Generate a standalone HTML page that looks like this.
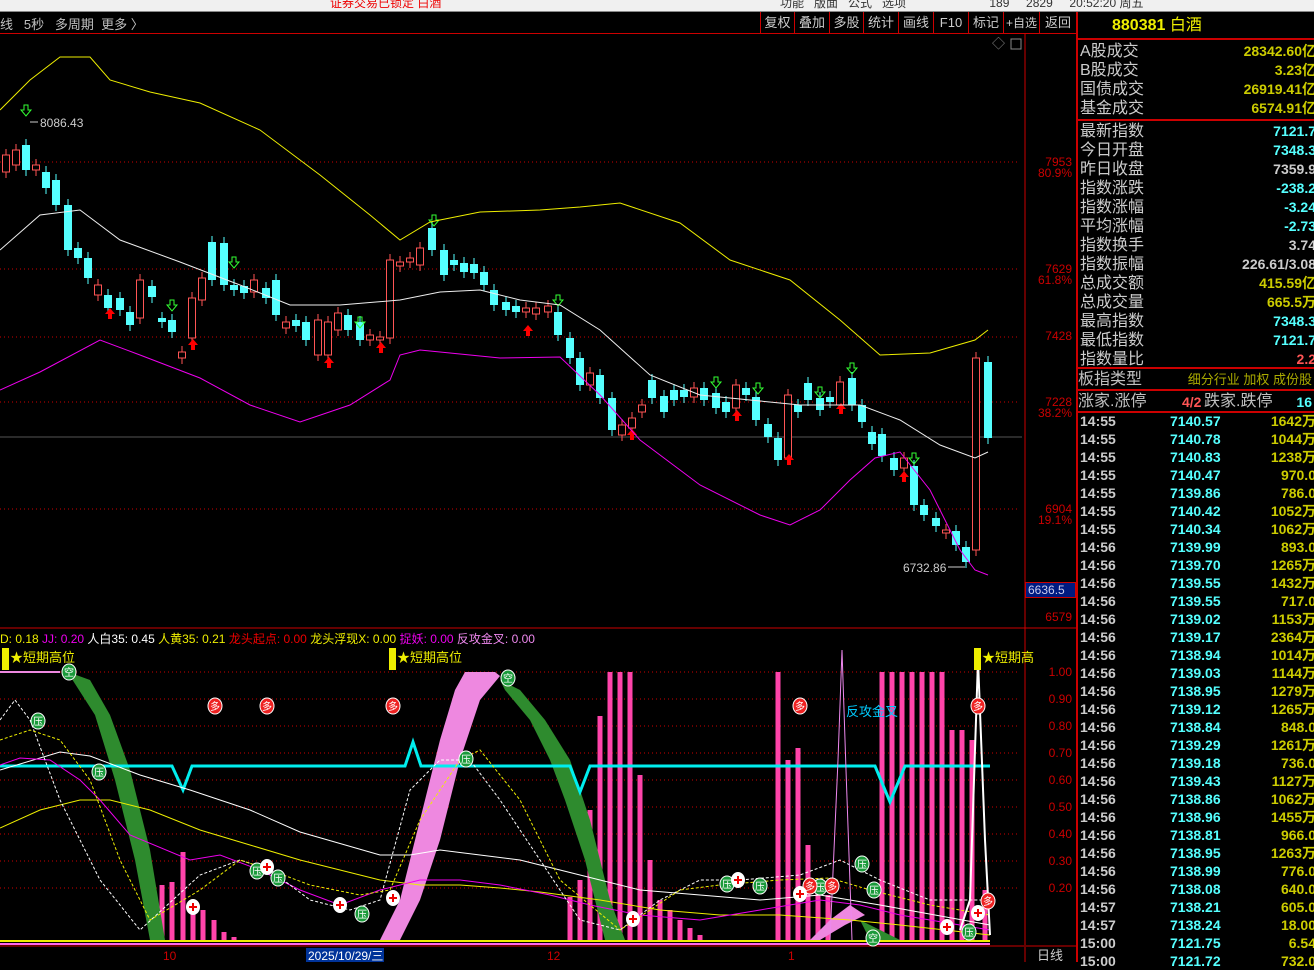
<!DOCTYPE html>
<html><head><meta charset="utf-8"><style>
*{margin:0;padding:0;box-sizing:border-box}
body{width:1314px;height:962px;background:#000;overflow:hidden;position:relative;font-family:"Liberation Sans","Noto Sans CJK SC",sans-serif;font-size:14px;color:#c0c0c0}
.abs{position:absolute}
#top{left:0;top:0;width:1314px;height:12px;background:#f0f0f0;border-bottom:1px solid #888}
#tb{left:0;top:12px;width:1076px;height:22px;border-bottom:1px solid #c00}
.btn{position:absolute;top:0;height:22px;border-left:1px solid #c00;color:#ccc;font-size:13px;line-height:22px;text-align:center;white-space:nowrap;overflow:hidden}
#rp{left:1076px;top:12px;width:238px;height:950px;border-left:2px solid #c00}
.row{position:absolute;left:2px;width:236px;height:19px;font-size:16px;line-height:19px;color:#ccc}
.row span{position:absolute;right:0;top:0;font-size:14px}
.tr{position:absolute;left:2px;width:236px;height:18px;font-size:14px;line-height:18px;font-weight:bold}
.ax{position:absolute;left:1030px;color:#c00;font-size:12px;line-height:11px;text-align:right;width:42px}
</style></head><body>
<div id="top" class="abs"><span style="position:absolute;left:330px;top:-6px;color:#e00;font-size:12px">证券交易已锁定 白酒</span><span style="position:absolute;left:780px;top:-6px;color:#333;font-size:12px">功能&nbsp;&nbsp;&nbsp;版面&nbsp;&nbsp;&nbsp;公式&nbsp;&nbsp;&nbsp;选项&nbsp;&nbsp;&nbsp;&nbsp;&nbsp;&nbsp;&nbsp;&nbsp;&nbsp;&nbsp;&nbsp;&nbsp;&nbsp;&nbsp;&nbsp;&nbsp;&nbsp;&nbsp;&nbsp;&nbsp;&nbsp;&nbsp;&nbsp;&nbsp;&nbsp;189&nbsp;&nbsp;&nbsp;&nbsp;&nbsp;2829&nbsp;&nbsp;&nbsp;&nbsp;&nbsp;20:52:20 周五</span></div>
<div id="tb" class="abs">
<span style="position:absolute;left:0;top:2px;font-size:13px">线&nbsp;&nbsp;&nbsp;5秒&nbsp;&nbsp;&nbsp;多周期&nbsp;&nbsp;更多 〉</span>
<div class="btn" style="left:760px;width:34px">复权</div><div class="btn" style="left:794px;width:35px">叠加</div><div class="btn" style="left:829px;width:34px">多股</div><div class="btn" style="left:863px;width:35px">统计</div><div class="btn" style="left:898px;width:35px">画线</div><div class="btn" style="left:933px;width:35px">F10</div><div class="btn" style="left:968px;width:35px">标记</div><div class="btn" style="left:1003px;width:36px;font-size:12px">+自选</div><div class="btn" style="left:1039px;width:37px">返回</div>
</div>
<svg class="abs" style="left:0;top:0" width="1076" height="962">
<line x1="1025" y1="34" x2="1025" y2="945" stroke="#c00"/>
<line x1="0" y1="628" x2="1076" y2="628" stroke="#c00"/>
<line x1="0" y1="946" x2="1076" y2="946" stroke="#c00"/>
<g stroke="#c00" stroke-dasharray="1,3"><line x1="0" y1="162" x2="1020" y2="162"/><line x1="0" y1="269" x2="1020" y2="269"/><line x1="0" y1="337" x2="1020" y2="337"/><line x1="0" y1="402" x2="1020" y2="402"/><line x1="0" y1="509" x2="1020" y2="509"/></g>
<line x1="0" y1="437" x2="1022" y2="437" stroke="#555"/>
<g id="lg" stroke="#c00" stroke-dasharray="1,3"></g>
<g id="cd"></g>
<polyline fill="none" stroke="#ee0" points="0,110 30,80 60,57 90,57 110,80 150,92 200,103 260,130 320,175 370,215 400,240 430,222 480,212 540,210 580,207 620,203 680,223 730,260 790,280 840,320 880,355 930,353 975,340 988,330"/>
<polyline fill="none" stroke="#eee" points="0,250 40,215 80,210 120,240 180,262 240,285 290,305 340,305 400,300 440,292 480,290 520,300 560,305 600,330 650,375 700,395 750,400 800,405 860,405 900,420 940,445 975,458 988,452"/>
<polyline fill="none" stroke="#e0e" points="0,390 40,372 100,340 140,355 200,378 250,405 300,422 350,405 390,380 400,355 420,350 450,353 500,358 560,357 600,395 640,440 700,485 760,515 790,525 820,510 850,480 875,458 900,452 930,490 960,550 975,570 988,575"/>
<text x="40" y="127" fill="#ccc" font-size="12">8086.43</text>
<line x1="30" y1="122" x2="38" y2="122" stroke="#ccc"/>
<text x="903" y="572" fill="#ccc" font-size="12">6732.86</text>
<line x1="948" y1="567" x2="965" y2="567" stroke="#ccc"/>
<text x="992" y="48" fill="#888" font-size="13">◇</text><rect x="1011" y="39" width="10" height="10" fill="none" stroke="#888"/>
<g id="lo"></g>
<polygon fill="#2e8b2e" points="68,672 90,680 110,715 130,770 150,850 165,940 150,940 135,860 115,780 95,715 70,676"/>
<polygon fill="#2e8b2e" points="500,680 520,690 545,720 570,760 590,820 610,900 625,940 605,940 585,860 565,800 550,760 530,720 505,690"/>
<polygon fill="#2e8b2e" points="860,920 880,930 900,940 870,940"/>
<polygon fill="#ee88e0" points="380,940 400,900 420,820 440,740 455,690 465,672 495,672 500,676 480,700 460,760 440,840 420,900 400,940"/>
<polygon fill="#ee88e0" points="810,940 830,920 850,905 865,915 845,925 820,940"/>
<polyline fill="none" stroke="#0ee" stroke-width="3" points="0,766 172,766 183,790 192,766 405,766 413,742 421,766 570,766 580,792 590,766 875,766 890,802 905,766 990,766"/>
<polyline fill="none" stroke="#ee0" points="0,828 40,810 80,800 110,800 150,810 200,830 250,845 300,860 380,880 420,885 460,885 500,888 540,892 600,900 660,910 720,915 780,915 850,920 900,925 990,935"/>
<polyline fill="none" stroke="#fff" points="0,770 60,752 90,756 140,775 190,790 250,810 300,832 380,855 410,855 440,850 480,855 520,860 560,870 600,880 640,890 700,895 760,900 820,895 880,905 990,925"/>
<polyline fill="none" stroke="#e0e" points="0,765 20,758 50,760 80,780 100,800 130,835 190,860 220,855 260,870 300,890 340,905 380,890 420,880 460,880 500,885 550,895 590,905 640,915 700,920 760,910 820,900 860,905 900,915 990,930"/>
<polyline fill="none" stroke="#fff" stroke-dasharray="3,2" points="0,720 15,700 30,720 60,800 100,880 140,930 200,875 240,860 270,870 310,900 350,910 380,900 410,790 440,760 470,760 500,800 540,860 580,920 620,930 660,900 700,880 740,880 800,875 840,860 880,880 930,900 990,900"/>
<polyline fill="none" stroke="#ee0" stroke-dasharray="3,2" points="0,740 30,730 60,740 90,780 120,860 150,920 200,890 240,860 270,870 310,885 360,895 390,890 420,820 460,760 480,750 520,800 560,880 620,930 680,890 720,885 780,880 830,878 870,890 930,905 990,915"/>
<line x1="0" y1="941" x2="990" y2="941" stroke="#ee0" stroke-width="2"/>
<line x1="0" y1="944" x2="990" y2="944" stroke="#f6e" stroke-width="2"/>
<line x1="0" y1="672" x2="60" y2="672" stroke="#ee88e0" stroke-width="2"/>
<polyline fill="none" stroke="#fff" stroke-width="2" points="960,930 970,900 978,660 985,840 990,935"/>
<polyline fill="none" stroke="#e8e" points="830,940 838,760 842,650 846,770 852,940"/>
<rect x="2" y="648" width="7" height="22" fill="#ee0"/><text x="10" y="662" fill="#ee0" font-size="13">★短期高位</text>
<rect x="389" y="648" width="7" height="22" fill="#ee0"/><text x="397" y="662" fill="#ee0" font-size="13">★短期高位</text>
<rect x="974" y="648" width="7" height="22" fill="#ee0"/><text x="982" y="662" fill="#ee0" font-size="13">★短期高</text>
<text x="846" y="716" fill="#0cf" font-size="13">反攻金叉</text>
<g id="ic"></g>
<rect x="306" y="948" width="78" height="14" fill="#003399"/>
<text x="308" y="960" fill="#fff" font-size="12">2025/10/29/三</text>
<g fill="#c00" font-size="12"><text x="163" y="960">10</text><text x="547" y="960">12</text><text x="788" y="960">1</text></g>
<text x="1037" y="960" fill="#ccc" font-size="13">日线</text>
<line x1="1025" y1="947" x2="1025" y2="962" stroke="#c00"/>
</svg>
<div class="ax" style="top:157px">7953<br>80.9%</div>
<div class="ax" style="top:264px">7629<br>61.8%</div>
<div class="ax" style="top:331px">7428</div>
<div class="ax" style="top:397px">7228<br>38.2%</div>
<div class="ax" style="top:504px">6904<br>19.1%</div>
<div class="abs" style="left:1025px;top:582px;width:51px;height:16px;background:#001a80;border:1px solid #c00;color:#cce;font-size:12px;line-height:14px;padding-left:2px">6636.5</div>
<div class="ax" style="top:612px">6579</div>
<div id="la" style="position:absolute;left:1030px;top:0;width:42px"></div>
<div class="abs" style="left:0;top:630px;font-size:12px;white-space:nowrap"><span style="color:#ee0">D: 0.18 </span><span style="color:#e0e">JJ: 0.20 </span><span style="color:#fff">人白35: 0.45 </span><span style="color:#ee0">人黄35: 0.21 </span><span style="color:#e00">龙头起点: 0.00 </span><span style="color:#ee0">龙头浮现X: 0.00 </span><span style="color:#e0e">捉妖: 0.00 </span><span style="color:#e8e">反攻金叉: 0.00</span></div>
<div id="rp" class="abs">
<div style="position:absolute;left:0;top:0;width:236px;height:28px;border-bottom:2px solid #c00;color:#ee0;font-size:16px;line-height:28px;padding-left:34px"><b>880381</b> 白酒</div>
<div id="rows"></div>
</div>
<script>
var NS="http://www.w3.org/2000/svg";
function el(p,t,a){var e=document.createElementNS(NS,t);for(var k in a)e.setAttribute(k,a[k]);p.appendChild(e);return e}
var cd=document.getElementById('cd');
var C=[[6,155,172,1],[16,150,165,1],[26,145,170,0],[36,165,170,1],[46,172,188,0],[56,180,205,0],[68,205,250,0],[78,248,258,0],[88,258,278,0],[98,285,295,1],[108,295,308,0],[120,298,310,0],[130,312,325,0],[140,280,318,1],[152,286,297,0],[162,318,322,0],[172,320,332,0],[182,352,358,1],[192,298,338,1],[202,278,300,1],[212,242,280,0],[224,243,285,0],[234,285,290,0],[244,286,293,0],[254,280,292,1],[266,288,298,0],[276,280,315,0],[286,322,328,1],[296,320,326,0],[306,322,340,0],[318,320,355,1],[328,322,355,1],[338,313,330,1],[348,315,330,0],[360,322,340,0],[370,335,340,1],[380,337,340,1],[390,260,338,1],[400,262,266,1],[410,258,262,1],[420,248,265,1],[432,228,250,0],[444,250,275,0],[454,260,265,0],[464,263,272,0],[474,264,273,0],[484,272,285,0],[494,290,305,0],[506,302,310,0],[516,306,312,0],[526,308,312,1],[536,308,314,1],[548,306,312,1],[558,312,335,0],[570,338,358,0],[580,358,385,0],[590,373,385,1],[600,375,398,0],[612,398,430,0],[622,425,435,1],[632,418,428,1],[642,405,412,1],[652,380,398,0],[664,396,412,0],[674,390,400,0],[684,390,397,0],[694,388,397,1],[704,388,400,0],[716,393,408,0],[726,402,412,0],[736,385,408,1],[746,388,395,0],[756,397,420,0],[768,424,437,0],[778,438,460,0],[788,395,458,1],[798,405,412,0],[808,383,400,0],[820,398,410,0],[830,397,402,0],[840,382,405,1],[852,378,405,0],[862,405,422,0],[872,432,444,0],[882,434,456,0],[894,458,470,0],[904,458,468,1],[914,466,505,0],[924,505,515,0],[936,518,526,0],[946,530,533,1],[956,531,545,0],[966,547,562,0],[976,358,550,1],[988,362,438,0]];
C.forEach(function(c){var col=c[3]?'#ff5555':'#55ffff';var h=Math.max(2,c[2]-c[1]);
el(cd,'line',{x1:c[0],x2:c[0],y1:c[1]-6,y2:c[2]+6,stroke:col});
if(c[3])el(cd,'rect',{x:c[0]-3.5,y:c[1],width:7,height:h,fill:'#000',stroke:col});else el(cd,'rect',{x:c[0]-4,y:c[1],width:8,height:h,fill:col});});
[[110,315],[193,346],[329,364],[381,349],[528,332],[632,436],[737,417],[789,461],[841,410],[904,478]].forEach(function(a){el(cd,'path',{d:'M'+a[0]+' '+(a[1]-7)+'l-5 6h3v5h4v-5h3z',fill:'#f00'})});
[[26,110],[172,305],[234,262],[360,322],[434,220],[558,300],[716,382],[758,388],[820,392],[852,368],[914,458]].forEach(function(a){el(cd,'path',{d:'M'+(a[0]-2)+' '+(a[1]-5)+'h4v5h3l-5 6l-5-6h3z',fill:'none',stroke:'#3f3'})});
var lg=document.getElementById('lg');
[672,699,726,753,780,807,834,861,888].forEach(function(y){el(lg,'line',{x1:0,x2:1020,y1:y,y2:y})});
var la=document.getElementById('la');
['1.00','0.90','0.80','0.70','0.60','0.50','0.40','0.30','0.20'].forEach(function(t,i){var d=document.createElement('div');d.className='ax';d.style.left='0';d.style.top=(667+i*27)+'px';d.textContent=t;la.appendChild(d)});
var lo=document.getElementById('lo');
var B=[[162,885],[172,882],[183,852],[193,900],[203,910],[214,920],[224,932],[234,937],[570,897],[580,880],[590,810],[600,716],[610,672],[620,672],[630,672],[640,775],[650,860],[660,900],[670,910],[680,920],[690,928],[700,935],[778,672],[788,760],[798,748],[808,845],[818,880],[828,895],[882,672],[892,672],[902,672],[912,672],[922,672],[932,672],[942,672],[952,730],[962,730],[972,740],[985,890]];
B.forEach(function(b){el(lo,'rect',{x:b[0]-2.5,y:b[1],width:5,height:940-b[1],fill:'#f4a'})});
var ic=document.getElementById('ic');
function bub(x,y,f,t,tc){el(ic,'ellipse',{cx:x,cy:y,rx:7,ry:8,fill:f,stroke:'#fff','stroke-width':1});var e=el(ic,'text',{x:x-5,y:y+4,fill:tc,'font-size':10});e.textContent=t}
[[69,672],[508,678],[873,938]].forEach(function(a){bub(a[0],a[1],'#1a9a3a','空','#fff')});
[[38,721],[99,772],[466,759],[257,871],[278,878],[362,914],[727,884],[760,886],[820,887],[862,864],[874,890],[969,932]].forEach(function(a){bub(a[0],a[1],'#1a9a3a','压','#fff')});
[[215,706],[267,706],[393,706],[800,706],[978,706],[810,886],[832,886],[988,901]].forEach(function(a){bub(a[0],a[1],'#e22','多','#fff')});
[[193,907],[267,867],[340,905],[393,898],[633,919],[738,880],[800,894],[947,927],[978,913]].forEach(function(a){el(ic,'ellipse',{cx:a[0],cy:a[1],rx:7,ry:8,fill:'#fff'});el(ic,'path',{d:'M'+(a[0]-4)+' '+a[1]+'h8M'+a[0]+' '+(a[1]-4)+'v8',stroke:'#e00','stroke-width':2})});
var R=[['A股成交','28342.60亿','#cc0'],['B股成交','3.23亿','#cc0'],['国债成交','26919.41亿','#cc0'],['基金成交','6574.91亿','#cc0']];
var R2=[['最新指数','7121.7','#5ff'],['今日开盘','7348.3','#5ff'],['昨日收盘','7359.9','#ccc'],['指数涨跌','-238.2','#5ff'],['指数涨幅','-3.24','#5ff'],['平均涨幅','-2.73','#5ff'],['指数换手','3.74','#ccc'],['指数振幅','226.61/3.08','#ccc'],['总成交额','415.59亿','#cc0'],['总成交量','665.5万','#cc0'],['最高指数','7348.3','#5ff'],['最低指数','7121.7','#5ff'],['指数量比','2.2','#f55']];
var rows=document.getElementById('rows');
function addRow(r,y){var d=document.createElement('div');d.className='row';d.style.top=y+'px';d.innerHTML=r[0]+'<span style="color:'+r[2]+'"><b>'+r[1]+'</b></span>';rows.appendChild(d)}
R.forEach(function(r,i){addRow(r,30+i*19)});
var s=document.createElement('div');s.style.cssText='position:absolute;left:0;top:107px;width:236px;border-top:2px solid #c00';rows.appendChild(s);
R2.forEach(function(r,i){addRow(r,110+i*19)});
</script>
<div class="abs" style="left:1078px;top:367px;width:236px;border-top:2px solid #c00;height:22px;font-size:16px;line-height:22px">板指类型<span style="position:absolute;right:2px;top:0;color:#aa0;font-size:13px">细分行业 加权 成份股</span></div>
<div class="abs" style="left:1078px;top:389px;width:236px;border-top:2px solid #c00;border-bottom:2px solid #c00;height:24px;font-size:16px;line-height:22px">涨家.涨停<span style="position:absolute;left:104px;color:#f55;font-size:14px"><b>4/2</b></span><span style="position:absolute;left:126px">跌家.跌停</span><span style="position:absolute;right:2px;color:#5ff;font-size:14px"><b>16</b></span></div>
<div class="abs" style="left:1078px;top:412px;width:236px">
<script>
var T=[['14:55','7140.57','1642万'],['14:55','7140.78','1044万'],['14:55','7140.83','1238万'],['14:55','7140.47','970.0'],['14:55','7139.86','786.0'],['14:55','7140.42','1052万'],['14:55','7140.34','1062万'],['14:56','7139.99','893.0'],['14:56','7139.70','1265万'],['14:56','7139.55','1432万'],['14:56','7139.55','717.0'],['14:56','7139.02','1153万'],['14:56','7139.17','2364万'],['14:56','7138.94','1014万'],['14:56','7139.03','1144万'],['14:56','7138.95','1279万'],['14:56','7139.12','1265万'],['14:56','7138.84','848.0'],['14:56','7139.29','1261万'],['14:56','7139.18','736.0'],['14:56','7139.43','1127万'],['14:56','7138.86','1062万'],['14:56','7138.96','1455万'],['14:56','7138.81','966.0'],['14:56','7138.95','1263万'],['14:56','7138.99','776.0'],['14:56','7138.08','640.0'],['14:57','7138.21','605.0'],['14:57','7138.24','18.00'],['15:00','7121.75','6.54'],['15:00','7121.72','732.0']];
T.forEach(function(t,i){document.write('<div class="tr" style="top:'+(i*18)+'px;color:#ccc">'+t[0]+'<span style="position:absolute;left:90px;color:#5ff">'+t[1]+'</span><span style="position:absolute;right:0;color:#cc0">'+t[2]+'</span></div>')});
</script>
</div>
</body></html>
